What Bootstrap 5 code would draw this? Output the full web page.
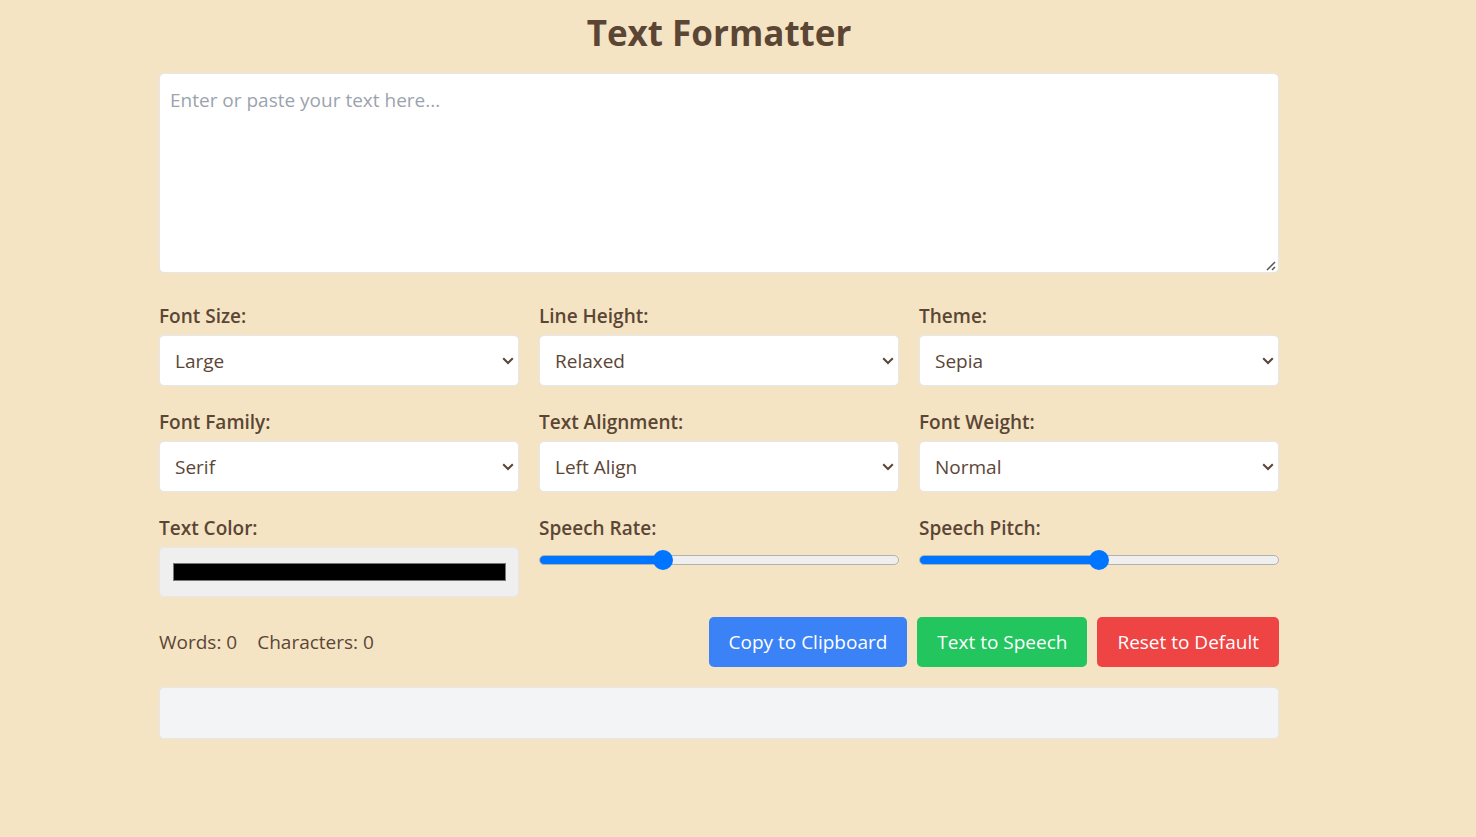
<!DOCTYPE html>
<html lang="en">
<head>
<meta charset="utf-8">
<meta name="viewport" content="width=device-width, initial-scale=1">
<title>Text Formatter</title>
<link href="https://cdn.jsdelivr.net/npm/bootstrap@5.3.0/dist/css/bootstrap.min.css" rel="stylesheet">
<style>
  body {
    background: #f4e4c3;
    color: #5b4636;
    font-family: "Segoe UI", "Open Sans", "Noto Sans", sans-serif;
    font-size: 19px;
    line-height: 30px;
    padding: 8px 38px 40px 0;
  }
  .formatter { max-width: 1120px; }
  .page-title { font-size: 35px; line-height: 50px; font-weight: 700; margin-bottom: 15px; }
  .field {
    border: 1px solid #e5e7eb;
    border-radius: 5px;
    font-size: inherit;
    line-height: inherit;
    color: inherit;
  }
  .field::placeholder { color: #9ca3af; }
  .source-text { height: 200px; padding: 11px 10px; resize: both; }
  .source-text::-webkit-resizer {
    background: url("data:image/svg+xml,%3Csvg xmlns='http://www.w3.org/2000/svg' width='15' height='15'%3E%3Cpath d='M4 13l8-8M9 13l3-3' fill='none' stroke='%23555' stroke-width='1.500'/%3E%3C/svg%3E") right bottom no-repeat;
  }
  .options { --bs-gutter-x: 20px; --bs-gutter-y: 21px; margin-top: 7px; }
  .options label { font-weight: 600; margin-bottom: 4px; }
  .pick {
    height: 51px;
    padding: 10px 30px 9px 15px;
    background-image: url("data:image/svg+xml,%3Csvg xmlns='http://www.w3.org/2000/svg' viewBox='0 0 12 8'%3E%3Cpath d='M1.2 1.2 6 6l4.800-4.800' fill='none' stroke='%235b4636' stroke-width='2'/%3E%3C/svg%3E");
    background-size: 12px 8px;
    background-position: right 4px center;
  }
  .swatch { width: 100%; height: 50px; padding: 15px 12px 15px 13px; background: #efefef; }
  .swatch::-webkit-color-swatch-wrapper { padding: 0; }
  .swatch::-webkit-color-swatch { border: 1px solid #777 !important; border-radius: 0; }
  .slider { appearance: none; display: block; width: 100%; height: 20px; margin: 7px 0 0; background: none; }
  .slider::-webkit-slider-runnable-track {
    height: 10px;
    border: 1px solid #b2b2b2;
    border-radius: 5px;
    background: linear-gradient(#0075ff, #0075ff) 0 0 / var(--fill) 100% no-repeat border-box, #efefef;
  }
  .slider::-webkit-slider-thumb {
    appearance: none;
    width: 20px;
    height: 20px;
    margin-top: -6px;
    border-radius: 50%;
    background: #0075ff;
  }
  .counts { gap: 20px; }
  .actions { gap: 10px; }
  .action { --bs-btn-color: #fff; --bs-btn-hover-color: #fff; border: 0; border-radius: 5px; padding: 10px 20px; font-size: 19px; line-height: 30px; }
  .copy { --bs-btn-bg: #3b82f6; --bs-btn-hover-bg: #2563eb; }
  .speak { --bs-btn-bg: #22c55e; --bs-btn-hover-bg: #16a34a; }
  .reset { --bs-btn-bg: #ef4444; --bs-btn-hover-bg: #dc2626; }
  .toolbar-row { margin: 20px 0; }
  .preview { min-height: 52px; background: #f3f4f6; }
</style>
</head>
<body>
<main class="formatter mx-auto">
  <h1 class="page-title text-center">Text Formatter</h1>
  <textarea class="form-control field source-text" aria-label="Text" placeholder="Enter or paste your text here..."></textarea>

  <div class="row options">
    <div class="col-md-4">
      <label class="d-block" for="size">Font Size:</label>
      <select class="form-select field pick" id="size"><option>Small</option><option selected>Large</option></select>
    </div>
    <div class="col-md-4">
      <label class="d-block" for="leading">Line Height:</label>
      <select class="form-select field pick" id="leading"><option>Normal</option><option selected>Relaxed</option></select>
    </div>
    <div class="col-md-4">
      <label class="d-block" for="theme">Theme:</label>
      <select class="form-select field pick" id="theme"><option>Light</option><option selected>Sepia</option></select>
    </div>
    <div class="col-md-4">
      <label class="d-block" for="family">Font Family:</label>
      <select class="form-select field pick" id="family"><option>Sans</option><option selected>Serif</option></select>
    </div>
    <div class="col-md-4">
      <label class="d-block" for="align">Text Alignment:</label>
      <select class="form-select field pick" id="align"><option>Left Align</option><option>Center</option></select>
    </div>
    <div class="col-md-4">
      <label class="d-block" for="weight">Font Weight:</label>
      <select class="form-select field pick" id="weight"><option>Normal</option><option>Bold</option></select>
    </div>
    <div class="col-md-4">
      <label class="d-block" for="color">Text Color:</label>
      <input class="form-control form-control-color field swatch" type="color" id="color" value="#000000">
    </div>
    <div class="col-md-4">
      <label class="d-block" for="rate">Speech Rate:</label>
      <input class="slider" type="range" id="rate" min="0.5" max="2" step="0.1" value="1" style="--fill: 34%">
    </div>
    <div class="col-md-4">
      <label class="d-block" for="pitch">Speech Pitch:</label>
      <input class="slider" type="range" id="pitch" min="0" max="2" step="0.1" value="1" style="--fill: 50%">
    </div>
  </div>

  <div class="toolbar-row d-flex flex-wrap justify-content-between align-items-center">
    <div class="counts d-flex"><span>Words: 0</span><span>Characters: 0</span></div>
    <div class="actions d-flex flex-wrap">
      <button type="button" class="btn action copy">Copy to Clipboard</button>
      <button type="button" class="btn action speak">Text to Speech</button>
      <button type="button" class="btn action reset">Reset to Default</button>
    </div>
  </div>

  <div class="field preview"></div>
</main>
<script src="https://cdn.jsdelivr.net/npm/bootstrap@5.3.0/dist/js/bootstrap.bundle.min.js"></script>
</body>
</html>
